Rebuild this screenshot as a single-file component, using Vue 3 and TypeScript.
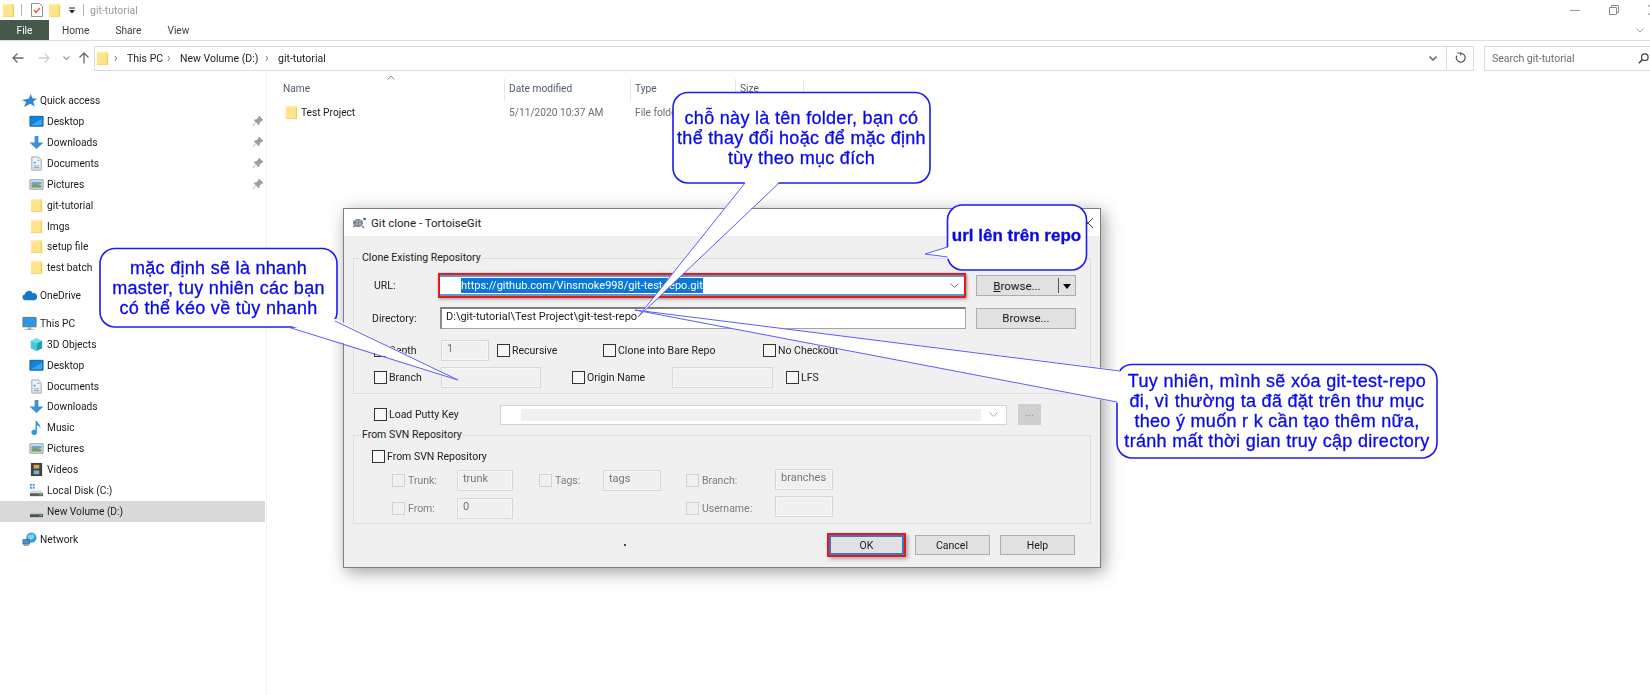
<script setup lang="ts">
interface NavItem { label: string; icon: string; level: number; pin?: boolean; gap?: boolean; selected?: boolean }
const navItems: NavItem[] = [
  { label: 'Quick access', icon: 'star', level: 0 },
  { label: 'Desktop', icon: 'desktop', level: 1, pin: true },
  { label: 'Downloads', icon: 'download', level: 1, pin: true },
  { label: 'Documents', icon: 'doc', level: 1, pin: true },
  { label: 'Pictures', icon: 'pic', level: 1, pin: true },
  { label: 'git-tutorial', icon: 'folder', level: 1 },
  { label: 'Imgs', icon: 'folder', level: 1 },
  { label: 'setup file', icon: 'folder', level: 1 },
  { label: 'test batch', icon: 'folder', level: 1 },
  { label: 'OneDrive', icon: 'cloud', level: 0, gap: true },
  { label: 'This PC', icon: 'pc', level: 0, gap: true },
  { label: '3D Objects', icon: 'cube', level: 1 },
  { label: 'Desktop', icon: 'desktop', level: 1 },
  { label: 'Documents', icon: 'doc', level: 1 },
  { label: 'Downloads', icon: 'download', level: 1 },
  { label: 'Music', icon: 'music', level: 1 },
  { label: 'Pictures', icon: 'pic', level: 1 },
  { label: 'Videos', icon: 'video', level: 1 },
  { label: 'Local Disk (C:)', icon: 'diskc', level: 1 },
  { label: 'New Volume (D:)', icon: 'disk', level: 1, selected: true },
  { label: 'Network', icon: 'net', level: 0, gap: true },
]
</script>

<template>
  <div class="screen">
    <svg class="defs" width="0" height="0">
      <defs>
        <symbol id="i-folder" viewBox="0 0 16 16">
          <path d="M2 1h12v14H2z" fill="#ffe48c" />
          <path d="M2 1h8v1.500H2z" fill="#fff0b8" />
          <path d="M12.500 3H14v12h-1.500z" fill="#f4cb63" />
          <path d="M2 14h12v1H2z" fill="#f7d478" />
        </symbol>
        <symbol id="i-star" viewBox="0 0 16 16">
          <path d="M9.500 1l1.500 4.500 5 .5-4 3 1.500 5.500L9 11.500 2 15l2.500-5.500L0 7.500 7 6z" fill="#2b86d8" />
        </symbol>
        <symbol id="i-desktop" viewBox="0 0 16 16">
          <path d="M1 2.500h14v10.500H1z" fill="#0f84d8" stroke="#0a5e9e" />
          <path d="M2 12l12-7v7z" fill="#3aa5ee" />
        </symbol>
        <symbol id="i-download" viewBox="0 0 16 16">
          <path d="M6 1h4v7h5.500L8 15 .5 8H6z" fill="#3b8fdc" />
        </symbol>
        <symbol id="i-doc" viewBox="0 0 16 16">
          <path d="M3 1h7l3 3v11H3z" fill="#eef2f5" stroke="#9a9fa5" />
          <path d="M5 6h2v2H5zM9 4h2v1H9zM5 10h6v1H5zM5 12h6v1H5z" fill="#5a9ad0" />
        </symbol>
        <symbol id="i-pic" viewBox="0 0 16 16">
          <path d="M1 3h14v10H1z" fill="#eef1f2" stroke="#8a8f93" />
          <path d="M2.500 5h11v3h-11z" fill="#66a8dc" />
          <path d="M2.500 8l5-1 6 2v2.500h-11z" fill="#7f9c6a" />
        </symbol>
        <symbol id="i-cloud" viewBox="0 0 16 16">
          <path d="M4 13a3 3 0 0 1-1-6 4.500 4.500 0 0 1 8.500-1.500A3.800 3.800 0 0 1 13 13z" fill="#1478c8" />
        </symbol>
        <symbol id="i-pc" viewBox="0 0 16 16">
          <path d="M1 1.500h14v10H1z" fill="#2a9ae8" stroke="#6a7278" />
          <path d="M6 12h4v2H6zM3 14h10v1H3z" fill="#a6adb2" />
        </symbol>
        <symbol id="i-cube" viewBox="0 0 16 16">
          <path d="M8 1l6 3v8l-6 3-6-3V4z" fill="#6fe0ea" />
          <path d="M8 7l6-3v8l-6 3z" fill="#1d9fbf" />
          <path d="M2 4l6 3v8l-6-3z" fill="#4cc8dc" />
        </symbol>
        <symbol id="i-music" viewBox="0 0 16 16">
          <path d="M7 1h1.500c.5 3 4.500 3.500 3.500 8-.500-2-1.800-3-3.500-3.500V13a3 3 0 1 1-1.500-2.500z" fill="#2a9ae8" />
        </symbol>
        <symbol id="i-video" viewBox="0 0 16 16">
          <path d="M2 1h12v14H2z" fill="#3d4346" />
          <path d="M5 3h6v4H5z" fill="#e6a53a" />
          <path d="M5 9h6v4H5z" fill="#7bb0d8" />
        </symbol>
        <symbol id="i-diskc" viewBox="0 0 16 16">
          <path d="M1 1h2v2H1zM4 1h2v2H4zM1 4h2v2H1zM4 4h2v2H4z" fill="#2a9ae8" />
          <path d="M2 8h11l2 3v3H1v-3z" fill="#d5d8da" />
          <path d="M1 11h14v3H1z" fill="#555b5e" />
          <path d="M11 12h3v1h-3z" fill="#6ed06e" />
        </symbol>
        <symbol id="i-disk" viewBox="0 0 16 16">
          <path d="M2 9h12l1 2v3H1v-3z" fill="#c4c7c9" />
          <path d="M1 11h14v3H1z" fill="#4a4f52" />
          <path d="M11 12h3v1h-3z" fill="#6ed06e" />
        </symbol>
        <symbol id="i-net" viewBox="0 0 16 16">
          <circle cx="10" cy="6" r="5.500" fill="#3aa0e0" />
          <path d="M6 4l6-2 1 4-5 3z" fill="#8fd0f4" />
          <path d="M1 8h7v5H1z" fill="#4a90c8" stroke="#36688e" stroke-width=".8" />
          <path d="M2 14h5v1H2z" fill="#8a9094" />
        </symbol>
        <symbol id="i-pin" viewBox="0 0 12 12">
          <path d="M7 1l4 4-1.500.5-2.300 2.300L7 10 2 5l2.200-.2L6.500 2.500zM3.500 7.500L1 11" fill="#9aa0a4" stroke="#9aa0a4" stroke-width=".8" />
        </symbol>
      </defs>
    </svg>

    <div class="explorer">
      <header class="titlebar">
        <svg class="ic-title"><use href="#i-folder" /></svg>
        <span class="tb-sep"></span>
        <svg class="ic-check" viewBox="0 0 12 14">
          <path d="M.5.500h8l3 3v10H.5z" fill="#fff" stroke="#8f8f8f" />
          <path d="M3 7l2 2.500L9 5" fill="none" stroke="#e0562a" stroke-width="1.300" />
        </svg>
        <svg class="ic-title ic-second"><use href="#i-folder" /></svg>
        <svg class="ic-qa" viewBox="0 0 8 7">
          <path d="M1 .5h6v1H1z" fill="#222" /><path d="M1 3h6L4 6.500z" fill="#222" />
        </svg>
        <span class="tb-sep tb-sep2"></span>
        <span class="win-title">git-tutorial</span>
        <div class="win-ctrl">
          <svg width="10" height="10" viewBox="0 0 10 10"><path d="M0 5.500h10" stroke="#9b9b9b" /></svg>
          <svg width="10" height="10" viewBox="0 0 10 10"><path d="M.5 2.500h7v7h-7zM2.500 2.500v-2h7v7h-2" fill="none" stroke="#8a8a8a" /></svg>
          <svg width="10" height="10" viewBox="0 0 10 10"><path d="M0 0l10 10M10 0L0 10" stroke="#8a8a8a" /></svg>
        </div>
      </header>

      <div class="tabs">
        <span class="tab-file">File</span>
        <span class="tab tab-home">Home</span>
        <span class="tab tab-share">Share</span>
        <span class="tab tab-view">View</span>
        <svg class="ribbon-chev" width="8" height="5" viewBox="0 0 8 5"><path d="M.5.500L4 4 7.500.5" fill="none" stroke="#a5a5a5" /></svg>
      </div>

      <div class="navbar">
        <svg class="nav-ic" viewBox="0 0 12 12"><path d="M11.500 6H1M5.500 1.500L1 6l4.500 4.500" fill="none" stroke="#6a6a6a" stroke-width="1.300" /></svg>
        <svg class="nav-ic nav-fw" viewBox="0 0 12 12"><path d="M.5 6H11M6.500 1.500L11 6l-4.500 4.500" fill="none" stroke="#cfcfcf" stroke-width="1.300" /></svg>
        <svg class="nav-chev" width="7" height="5" viewBox="0 0 7 5"><path d="M.5.500l3 3 3-3" fill="none" stroke="#9a9a9a" stroke-width="1.200" /></svg>
        <svg class="nav-ic nav-up" viewBox="0 0 12 12"><path d="M6 11.500V1M1.500 5.500L6 1l4.500 4.500" fill="none" stroke="#6a6a6a" stroke-width="1.300" /></svg>
        <div class="address">
          <svg class="ic-title addr-folder"><use href="#i-folder" /></svg>
          <span class="crumb-sep">›</span><span class="crumb c1">This PC</span>
          <span class="crumb-sep">›</span><span class="crumb c2">New Volume (D:)</span>
          <span class="crumb-sep">›</span><span class="crumb">git-tutorial</span>
          <svg class="addr-chev" width="8" height="5" viewBox="0 0 8 5"><path d="M.5.500L4 4 7.500.5" fill="none" stroke="#555" stroke-width="1.300" /></svg>
          <span class="addr-refresh">
            <svg width="11" height="12" viewBox="0 0 11 12"><path d="M2.200 1h3.500v2.600" fill="none" stroke="#555" stroke-width="1.100" /><path d="M5.700 1.300a4.400 4.400 0 1 1-3.900 2.400" fill="none" stroke="#555" stroke-width="1.200" /></svg>
          </span>
        </div>
        <div class="search">
          <span>Search git-tutorial</span>
          <svg class="search-ic" width="11" height="11" viewBox="0 0 11 11"><circle cx="6.800" cy="4.200" r="3.300" fill="none" stroke="#444" stroke-width="1.200" /><path d="M4.300 6.700L.8 10.200" stroke="#444" stroke-width="1.500" /></svg>
        </div>
      </div>

      <main class="body">
        <nav class="sidebar">
          <div
            v-for="(item, i) in navItems"
            :key="i"
            class="nav-row"
            :class="{ 'nav-sub': item.level === 1, 'nav-gap': item.gap, 'nav-selected': item.selected }"
          >
            <svg class="nav-icon"><use :href="'#i-' + item.icon" /></svg>
            <span class="nav-label">{{ item.label }}</span>
            <svg v-if="item.pin" class="nav-pin"><use href="#i-pin" /></svg>
          </div>
        </nav>
        <section class="list">
          <div class="list-head">
            <span class="col-name">Name</span>
            <svg class="sort" width="8" height="5" viewBox="0 0 8 5"><path d="M.5 4.500L4 1l3.500 3.500" fill="none" stroke="#8a8a8a" /></svg>
            <span class="col-date">Date modified</span>
            <span class="col-type">Type</span>
            <span class="col-size">Size</span>
          </div>
          <div class="list-row">
            <span class="col-name row-name"><svg class="row-ic"><use href="#i-folder" /></svg>Test Project</span>
            <span class="col-date row-dim">5/11/2020 10:37 AM</span>
            <span class="col-type row-dim">File folder</span>
          </div>
        </section>
      </main>
    </div>

    <div class="dialog">
      <div class="d-title">
        <svg class="tgit" width="14" height="12" viewBox="0 0 14 12">
          <ellipse cx="6" cy="6" rx="5" ry="4" fill="#6d7a88" />
          <path d="M3 4h6M2 7h8M5 3v6M8 3v6" stroke="#c3c9cf" stroke-width=".7" />
          <circle cx="12.500" cy="2" r="1.300" fill="#445160" />
          <path d="M1 10l2-1M10 9l2 2" stroke="#6d7a88" stroke-width="1.200" />
        </svg>
        <span>Git clone - TortoiseGit</span>
        <svg class="d-close" width="10" height="10" viewBox="0 0 10 10"><path d="M0 0l10 10M10 0L0 10" stroke="#444" /></svg>
      </div>
      <div class="d-body">
        <div class="group g1">
          <span class="legend">Clone Existing Repository</span>
          <div class="row r-url">
            <span class="lab lab-url">URL:</span>
            <div class="combo-url">
              <span class="sel">https://github.com/Vinsmoke998/git-test-repo.git</span>
              <svg class="combo-chev" width="9" height="5" viewBox="0 0 9 5"><path d="M.5.500l4 4 4-4" fill="none" stroke="#777" /></svg>
            </div>
            <button class="btn btn-split"><span><u>B</u>rowse...</span><i></i><b></b></button>
          </div>
          <div class="row r-dir">
            <span class="lab">Directory:</span>
            <div class="input-dir">D:\git-tutorial\Test Project\git-test-repo</div>
            <button class="btn">Browse...</button>
          </div>
          <div class="row r-depth">
            <label class="chk"><i></i>Depth</label>
            <span class="dis w-48">1</span>
            <label class="chk"><i></i>Recursive</label>
            <label class="chk"><i></i>Clone into Bare Repo</label>
            <label class="chk"><i></i>No Checkout</label>
          </div>
          <div class="row r-branch">
            <label class="chk"><i></i>Branch</label>
            <span class="dis w-100"></span>
            <label class="chk"><i></i>Origin Name</label>
            <span class="dis w-101"></span>
            <label class="chk"><i></i>LFS</label>
          </div>
        </div>

        <div class="row r-putty">
          <label class="chk"><i></i>Load Putty Key</label>
          <div class="combo-dis">
            <span class="combo-fill"></span>
            <svg width="9" height="5" viewBox="0 0 9 5"><path d="M.5.500l4 4 4-4" fill="none" stroke="#aaa" /></svg>
          </div>
          <span class="dots">...</span>
        </div>

        <div class="group g2">
          <span class="legend">From SVN Repository</span>
          <label class="chk chk-svn"><i></i>From SVN Repository</label>
          <div class="svn-grid">
            <label class="chk off"><i></i>Trunk:</label>
            <span class="dis w-56">trunk</span>
            <label class="chk off"><i></i>Tags:</label>
            <span class="dis w-58">tags</span>
            <label class="chk off"><i></i>Branch:</label>
            <span class="dis w-58 up-2">branches</span>
            <label class="chk off"><i></i>From:</label>
            <span class="dis w-56">0</span>
            <label class="chk off user"><i></i>Username:</label>
            <span class="dis w-58 up-4"></span>
          </div>
        </div>

        <div class="d-foot">
          <span class="dot"></span>
          <button class="btn btn-ok">OK</button>
          <button class="btn">Cancel</button>
          <button class="btn">Help</button>
        </div>
      </div>
    </div>

    <svg class="callout-art" width="1650" height="695" viewBox="0 0 1650 695">
      <g class="bubble">
        <rect x="1117" y="364.500" width="320" height="93.500" rx="15" />
        <path class="wedge" d="M1120 370L635 310 1118 403z" />
        <path class="tail" d="M1120 371L635 310 1117 402" />

        <rect x="947.500" y="205" width="139" height="65" rx="15" />
        <path class="wedge" d="M949 247L925 254 949 259z" />
        <path class="tail" d="M947.500 247L925 254 947.500 257" />

        <rect x="673" y="92.500" width="257" height="90.500" rx="15" />
        <path class="wedge" d="M746 181L638 317 780 181z" />
        <path class="tail" d="M745 183L638 317 779 183" />

        <rect x="100" y="248.500" width="237" height="78.500" rx="15" />
        <path class="wedge" d="M288 325L458 380 336 319z" />
        <path class="tail" d="M288 327L458 380 335 321" />
      </g>
    </svg>

    <div class="call c-top">chỗ này là tên folder, bạn có<br />thể thay đổi hoặc để mặc định<br />tùy theo mục đích</div>
    <div class="call c-left">mặc định sẽ là nhanh<br />master, tuy nhiên các bạn<br />có thể kéo về tùy nhanh</div>
    <div class="call c-url">url lên trên repo</div>
    <div class="call c-right">Tuy nhiên, mình sẽ xóa git-test-repo<br />đi, vì thường ta đã đặt trên thư mục<br />theo ý muốn r k cần tạo thêm nữa,<br />tránh mất thời gian truy cập directory</div>
  </div>
</template>

<style>
html, body { margin: 0; background: #fff; }
</style>

<style scoped>
.screen {
  position: relative;
  width: 1650px;
  height: 695px;
  overflow: hidden;
  background: #fff;
  font-family: Roboto, "Noto Sans", sans-serif;
  font-size: 10.200px;
  color: #1a1a1a;
}
.defs { position: absolute; }
.explorer { display: flex; flex-direction: column; height: 100%; filter: blur(.35px); }

.titlebar { height: 20px; display: flex; align-items: center; padding-left: 1px; }
.ic-title { width: 15px; height: 15px; flex: none; }
.ic-second { margin-left: 4px; }
.tb-sep { width: 1px; height: 12px; background: #b5b5b5; margin: 0 9px 0 5px; }
.tb-sep2 { margin: 0 6px 0 7px; }
.ic-check { width: 12px; height: 14px; margin-left: 0; }
.ic-qa { width: 8px; height: 7px; margin-left: 6px; }
.win-title { color: #9a9a9a; font-size: 10.500px; }
.win-ctrl { margin-left: auto; display: flex; gap: 29px; padding-right: 0; transform: translateX(8px); }

.tabs { height: 20px; display: flex; align-items: center; border-bottom: 1px solid #dcdcdc; position: relative; }
.tab-file { width: 49px; height: 20px; background: #46584a; color: #fff; display: flex; align-items: center; justify-content: center; }
.tab { color: #3c3c3c; }
.tab-home { margin-left: 13px; }
.tab-share { margin-left: 26px; }
.tab-view { margin-left: 26px; }
.ribbon-chev { margin-left: auto; margin-right: 6px; }

.navbar { height: 26px; margin-top: 4px; display: flex; align-items: center; }
.nav-ic { width: 12px; height: 12px; flex: none; margin-left: 12px; }
.nav-fw { margin-left: 14px; }
.nav-chev { margin-left: 13px; }
.nav-up { margin-left: 8px; }
.address {
  margin-left: 4px; width: 1380px; height: 25px; box-sizing: border-box;
  border: 1px solid #dcdcdc; display: flex; align-items: center; font-size: 10.500px;
  color: #222;
}
.addr-folder { margin-right: 4px; }
.crumb-sep { color: #777; width: 13px; flex: none; font-size: 12px; }
.c1 { width: 40px; flex: none; white-space: nowrap; }
.c2 { width: 85px; flex: none; white-space: nowrap; }
.addr-chev { margin-left: auto; margin-right: 9px; }
.addr-refresh { width: 26px; height: 100%; border-left: 1px solid #dcdcdc; display: flex; align-items: center; justify-content: center; }
.search {
  margin-left: 10px; flex: 1; height: 25px; box-sizing: border-box;
  border: 1px solid #dcdcdc; border-right: 0; display: flex; align-items: center;
  padding-left: 7px; color: #6d6d6d; font-size: 10.500px;
}
.search-ic { margin-left: auto; margin-right: 1px; }

.body { flex: 1; display: flex; min-height: 0; }
.sidebar { width: 267px; box-sizing: border-box; border-right: 1px solid #f0f0f0; padding-top: 19.500px; }
.nav-row { height: 20.860px; display: flex; align-items: center; padding-left: 22px; position: relative; width: 265px; box-sizing: border-box; white-space: nowrap; }
.nav-sub { padding-left: 29px; }
.nav-gap { margin-top: 7px; }
.nav-selected { background: #d9d9d9; }
.nav-icon { width: 15px; height: 15px; flex: none; margin-right: 3px; }
.nav-sub .nav-label { margin-left: 0; }
.nav-pin { position: absolute; left: 252px; top: 4px; width: 12px; height: 12px; }

.list { flex: 1; min-width: 0; }
.list-head, .list-row { display: grid; grid-template-columns: 226px 126px 105px 70px; align-items: center; padding-left: 16px; }
.list-head { height: 22px; margin-top: 6px; color: #4f5b6e; position: relative; }
.col-date, .col-type, .col-size { position: relative; }
.list-head .col-date::before, .list-head .col-type::before, .list-head .col-size::before, .list-head .col-size::after {
  content: ""; position: absolute; left: -5px; top: -4px; height: 22px; width: 1px; background: #e5e5e5;
}
.list-head .col-size::after { left: 63px; }
.sort { position: absolute; left: 120px; top: -2px; }
.list-row { height: 22px; margin-top: 2px; }
.row-name { display: flex; align-items: center; color: #1a1a1a; }
.row-ic { width: 15px; height: 15px; margin: 0 2px 0 1px; }
.row-dim { color: #6d6d6d; white-space: nowrap; }

.dialog {
  position: absolute; left: 343px; top: 208px; width: 758px; height: 360px; box-sizing: border-box;
  border: 1px solid #7f7f7f; background: #f0f0f0; box-shadow: 3px 4px 16px rgba(0, 0, 0, .38);
  display: flex; flex-direction: column; filter: blur(.3px); font-size: 10.500px;
}
.d-title { height: 27px; flex: none; background: #fff; display: flex; align-items: center; padding-left: 8px; gap: 5px; color: #222; font-size: 11.500px; }
.d-close { margin-left: auto; margin-right: 7px; }
.d-body { flex: 1; padding: 22px 9px 0; display: flex; flex-direction: column; }

.group { border: 1px solid #dcdcdc; position: relative; }
.legend { position: absolute; left: 7px; top: -9px; background: #f0f0f0; padding: 0 1px; line-height: 16px; white-space: nowrap; color: #222; }
.g1 { height: 136px; box-sizing: border-box; padding: 16px 14px 0 18px; }
.g2 { height: 89px; box-sizing: border-box; margin-top: 11px; padding: 12px 0 0 18px; }

.row { display: grid; align-items: center; }
.r-url { grid-template-columns: 68px 526px 100px; column-gap: 0; height: 21px; }
.r-url .btn { margin-left: 10px; }
.r-dir { grid-template-columns: 68px 526px 100px; height: 21px; margin-top: 11px; }
.r-dir .btn { margin-left: 10px; }
.r-depth { grid-template-columns: 69px 56px 106px 160px auto; height: 21px; margin-top: 12px; }
.r-branch { grid-template-columns: 69px 131px 100px 114px auto; height: 21px; margin-top: 6px; }
.r-depth .chk:first-child, .r-branch .chk:first-child { padding-left: 2px; }
.r-putty { grid-template-columns: 126px 507px 23px; column-gap: 0; height: 20px; margin: 10px 0 0 21px; }
.lab { white-space: nowrap; color: #222; }
.lab-url { padding-left: 2px; }

.combo-url {
  position: relative; height: 25px; margin: -2px 0; box-sizing: border-box; width: 528px; margin-left: -2px;
  border: 2px solid #f01414; box-shadow: 1px 1px 3px rgba(0, 0, 0, .4); background: #fff;
  display: flex; align-items: center; padding-left: 21px;
}
.combo-url::before { content: ""; position: absolute; inset: 0; border-top: 2px solid #5d9ac9; border-bottom: 2px solid #5d9ac9; }
.sel { background: #0a78d4; color: #fff; line-height: 15px; white-space: nowrap; font-size: 11px; padding: 0; }
.combo-chev { margin-left: auto; margin-right: 5px; }
.input-dir {
  height: 22px; box-sizing: border-box; background: #fff; border: 1px solid #a5a5a5; border-top: 2px solid #7d7d7d; border-left: 2px solid #8a8a8a;
  line-height: 15px; padding-left: 4px; color: #222; white-space: nowrap; font-size: 11px;
}
.btn {
  height: 20px; padding: 0; font: inherit; color: #1a1a1a; background: #e1e1e1;
  border: 1px solid #adadad; width: 75px;
}
.r-url .btn, .r-dir .btn { width: 100px; height: 21px; font-size: 11.500px; }
.btn-split { display: flex; align-items: center; justify-content: center; position: relative; padding-right: 18px; box-sizing: border-box; }
.btn-split i { position: absolute; right: 16px; top: 2px; bottom: 2px; width: 1px; background: #555; }
.btn-split b { position: absolute; right: 4px; top: 8px; width: 0; height: 0; border: 4px solid transparent; border-top: 5px solid #000; border-bottom: 0; }

.chk { display: flex; align-items: center; white-space: nowrap; color: #222; }
.chk i { width: 11px; height: 11px; border: 1px solid #333; background: #f8f8f8; margin-right: 2px; flex: none; }
.chk.off { color: #7c7c7c; }
.chk.off i { border-color: #d2d2d2; background: #f0f0f0; margin-right: 3px; }
.chk-svn { height: 17px; margin-top: 0; }

.dis {
  display: block; box-sizing: border-box; height: 21px; border: 1px solid #d7d7d7; outline: 1px solid #f6f6f6; outline-offset: -2px;
  color: #777; line-height: 16px; padding-left: 5px; font-size: 11px;
}
.w-48 { width: 48px; }
.w-100 { width: 100px; }
.w-101 { width: 101px; }
.w-56 { width: 56px; }
.w-58 { width: 58px; }
.up-2 { margin-top: -2px; }
.up-4 { margin-top: -4px; }

.combo-dis {
  height: 20px; box-sizing: border-box; border: 1px solid #d4d4d4; background: #fff; display: flex; align-items: center; padding: 0 8px 0 20px;
}
.combo-fill { flex: 1; height: 12px; background: #f0f0f0; margin-right: 8px; }
.dots { margin-left: 11px; height: 21px; width: 23px; background: #cfcfcf; color: #888; text-align: center; line-height: 18px; }

.svn-grid {
  display: grid; grid-template-columns: 65px 82px 64px 83px 89px 58px; grid-template-rows: 21px 21px; row-gap: 7px;
  padding-left: 20px; margin-top: 5px; align-items: center;
}
.user { grid-column: 5; }

.d-foot { display: flex; align-items: center; justify-content: flex-end; gap: 10.500px; margin-top: 11px; padding-right: 16px; position: relative; }
.dot { width: 2px; height: 2px; background: #111; border-radius: 50%; margin-right: auto; margin-left: 271px; }
.btn-ok { border: 2px solid #3b78c2; box-shadow: 0 0 0 2px #f01414, 2px 2px 4px 2px rgba(0, 0, 0, .3); }

.callout-art { position: absolute; left: 0; top: 0; }
.bubble rect { fill: #fff; stroke: #1c1cf0; stroke-width: 1.600; }
.wedge { fill: #fff; }
.tail { fill: none; stroke: #5c5cf5; stroke-width: 1; }

.call {
  position: absolute; display: flex; align-items: center; justify-content: center; text-align: center;
  font-family: "Liberation Sans", Arial, sans-serif; font-size: 18px; line-height: 20px; color: #0a0ae6;
  letter-spacing: .3px; white-space: nowrap; -webkit-text-stroke: .3px #0a0ae6; filter: blur(.25px);
}
.c-top { left: 673px; top: 92px; width: 257px; height: 91px; }
.c-left { left: 100px; top: 248px; width: 237px; height: 79px; }
.c-url { left: 947px; top: 205px; width: 139px; height: 65px; font-weight: 700; padding-bottom: 3px; box-sizing: border-box; font-size: 17px; letter-spacing: 0; }
.c-right { left: 1117px; top: 364px; width: 320px; height: 94px; }
</style>
